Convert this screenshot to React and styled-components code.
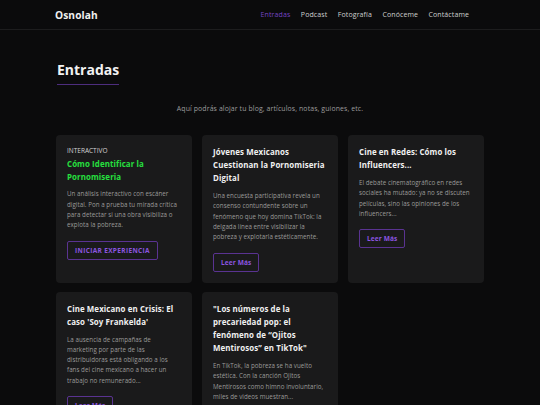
import React from "react";
import styled, { createGlobalStyle } from "styled-components";

const GlobalStyle = createGlobalStyle`
  html, body {
    margin: 0;
    padding: 0;
    background: #0b0b0c;
    font-family: "Open Sans", "DejaVu Sans", sans-serif;
    color: #f2f2f2;
  }
  * {
    box-sizing: border-box;
  }
`;

const posts = [
  {
    label: "INTERACTIVO",
    title: "Cómo Identificar la Pornomiseria",
    text: "Un análisis interactivo con escáner digital. Pon a prueba tu mirada crítica para detectar si una obra visibiliza o explota la pobreza.",
    cta: "INICIAR EXPERIENCIA",
    highlight: true,
  },
  {
    title: "Jóvenes Mexicanos Cuestionan la Pornomiseria Digital",
    text: "Una encuesta participativa revela un consenso contundente sobre un fenómeno que hoy domina TikTok: la delgada línea entre visibilizar la pobreza y explotarla estéticamente.",
    cta: "Leer Más",
  },
  {
    title: "Cine en Redes: Cómo los Influencers...",
    text: "El debate cinematográfico en redes sociales ha mutado: ya no se discuten películas, sino las opiniones de los influencers...",
    cta: "Leer Más",
  },
  {
    title: "Cine Mexicano en Crisis: El caso 'Soy Frankelda'",
    text: "La ausencia de campañas de marketing por parte de las distribuidoras está obligando a los fans del cine mexicano a hacer un trabajo no remunerado...",
    cta: "Leer Más",
  },
  {
    title: "\"Los números de la precariedad pop: el fenómeno de “Ojitos Mentirosos” en TikTok\"",
    text: "En TikTok, la pobreza se ha vuelto estética. Con la canción Ojitos Mentirosos como himno involuntario, miles de videos muestran...",
    cta: "Leer Más",
  },
];

const links = ["Entradas", "Podcast", "Fotografía", "Conóceme", "Contáctame"];

export default function App() {
  return (
    <>
      <GlobalStyle />
      <Header>
        <HeaderInner>
          <Logo>Osnolah</Logo>
          <Nav>
            {links.map((l, i) => (
              <NavLink key={l} $active={i === 0}>
                {l}
              </NavLink>
            ))}
          </Nav>
        </HeaderInner>
      </Header>
      <Main>
        <PageTitle>Entradas</PageTitle>
        <Intro>Aquí podrás alojar tu blog, artículos, notas, guiones, etc.</Intro>
        <Grid>
          {posts.map((p) => (
            <Card key={p.title}>
              {p.label && <Label>{p.label}</Label>}
              <CardTitle $highlight={p.highlight}>{p.title}</CardTitle>
              <Excerpt>{p.text}</Excerpt>
              <Button $upper={p.highlight}>{p.cta}</Button>
            </Card>
          ))}
        </Grid>
      </Main>
    </>
  );
}

const Header = styled.header`
  height: 30px;
  border-bottom: 1px solid #1d1d1e;
  background: #0b0b0c;
`;

const HeaderInner = styled.div`
  width: 430px;
  height: 100%;
  margin: 0 auto;
  display: flex;
  align-items: center;
  justify-content: space-between;
  padding: 0 16px 0 0;
`;

const Logo = styled.div`
  font-size: 10.2px;
  font-weight: 700;
  color: #f0f0f0;
  letter-spacing: 0.1px;
`;

const Nav = styled.nav`
  display: flex;
  gap: 10.5px;
`;

const NavLink = styled.a`
  font-size: 7px;
  letter-spacing: 0.1px;
  color: ${(p) => (p.$active ? "#7444c2" : "#cfcfcf")};
  text-decoration: none;
  cursor: pointer;
`;

const Main = styled.main`
  width: 428px;
  margin: 0 auto;
  padding: 28px 0 30px;
`;

const PageTitle = styled.h1`
  display: inline-block;
  margin: 0 0 0 1px;
  font-size: 14px;
  line-height: 18px;
  font-weight: 700;
  color: #f2f2f2;
  padding-bottom: 5px;
  border-bottom: 1.5px solid #4d2d7e;
`;

const Intro = styled.p`
  margin: 19px 0 21px;
  text-align: center;
  font-size: 6.9px;
  letter-spacing: 0.12px;
  line-height: 10px;
  color: #9d9d9d;
`;

const Grid = styled.div`
  display: grid;
  grid-template-columns: repeat(3, 136px);
  column-gap: 10px;
  row-gap: 9px;
`;

const Card = styled.article`
  background: #1a1a1b;
  border-radius: 4px;
  padding: 11px 11px 11px;
  display: flex;
  flex-direction: column;
  align-items: flex-start;
`;

const Label = styled.div`
  font-size: 6.5px;
  line-height: 10px;
  color: #d4d4d4;
  margin-bottom: 1.5px;
`;

const CardTitle = styled.h3`
  margin: 0;
  font-size: 7.9px;
  letter-spacing: 0.1px;
  line-height: 13.2px;
  font-weight: 700;
  color: ${(p) => (p.$highlight ? "#26e03f" : "#f0f0f0")};
`;

const Excerpt = styled.p`
  margin: 5.5px 0 10px;
  font-size: 6.2px;
  letter-spacing: 0.05px;
  line-height: 10.3px;
  color: #9a9a9a;
`;

const Button = styled.a`
  display: inline-flex;
  align-items: center;
  height: 19px;
  padding: 0 7px;
  border: 1px solid #5a3391;
  border-radius: 2px;
  font-size: 6.5px;
  font-weight: 700;
  letter-spacing: ${(p) => (p.$upper ? "0.35px" : "0.15px")};
  color: #8c55e0;
  text-transform: ${(p) => (p.$upper ? "uppercase" : "none")};
  cursor: pointer;
`;
